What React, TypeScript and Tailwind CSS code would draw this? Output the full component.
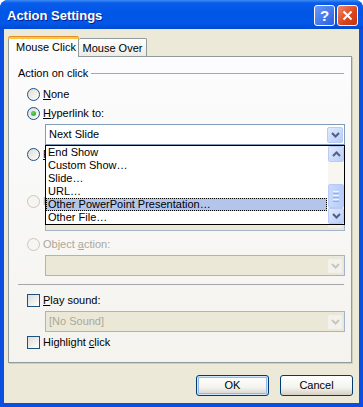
import clsx from "clsx";

function Chevron({ up, color = "#4D6185" }: { up?: boolean; color?: string }) {
  return (
    <svg width="9" height="6" viewBox="0 0 9 6">
      <path d={up ? "M1 5 L4.5 1.5 L8 5" : "M1 1 L4.5 4.5 L8 1"} fill="none" stroke={color} strokeWidth="2" />
    </svg>
  );
}

function ArrowButton({ up, disabled }: { up?: boolean; disabled?: boolean }) {
  return (
    <span
      className={clsx(
        "flex h-[16px] w-[16px] shrink-0 items-center justify-center rounded-[2px] border",
        disabled
          ? "border-[#E8E6DD] bg-[#F2F1EB]"
          : "border-[#B9CBF5] bg-[linear-gradient(135deg,#E2EBFE,#B9CDF8)]"
      )}
    >
      <Chevron up={up} color={disabled ? "#C9C7BA" : "#4D6185"} />
    </span>
  );
}

function Radio({ checked, disabled }: { checked?: boolean; disabled?: boolean }) {
  return (
    <span
      className={clsx(
        "flex h-[13px] w-[13px] shrink-0 items-center justify-center rounded-full border",
        disabled ? "border-[#CAC8BB] bg-[#F6F5F1]" : "border-[#1C5180] bg-[linear-gradient(135deg,#DCDBD5,#FFFFFF)]"
      )}
    >
      {checked && <span className="h-[5px] w-[5px] rounded-full bg-[radial-gradient(circle_at_35%_35%,#5ED95A,#21A121)]" />}
    </span>
  );
}

function Checkbox() {
  return <span className="h-[13px] w-[13px] shrink-0 border border-[#1C5180] bg-[linear-gradient(135deg,#DCDBD5,#FFFFFF)]" />;
}

function Combo({ text, disabled, children }: { text?: string; disabled?: boolean; children?: React.ReactNode }) {
  return (
    <div
      className={clsx(
        "relative ml-[36px] mr-[6px] flex h-[21px] items-center border p-[1px]",
        disabled ? "border-[#A5B5C9] bg-[#EBE8D8]" : "border-[#7F9DB9] bg-white"
      )}
    >
      <span className={clsx("flex-1 pl-[2px] leading-[13px]", disabled ? "text-[#ACA899]" : "text-black")}>{text}</span>
      <span className="mt-[1px] flex h-[17px] items-start">
        <ArrowButton disabled={disabled} />
      </span>
      {children}
    </div>
  );
}

const items = ["End Show", "Custom Show…", "Slide…", "URL…", "Other PowerPoint Presentation…", "Other File…"];

function DropList() {
  return (
    <div className="absolute left-[-1px] top-[20px] z-20 flex h-[80px] w-[300px] border border-black bg-white">
      <div className="flex flex-1 flex-col">
        {items.map((it, i) => (
          <div
            key={it}
            className={clsx(
              "h-[13px] pl-[2px] leading-[13px] text-black",
              i === 4 && "mr-[1px] bg-[#B4C5EB] outline-1 outline-dotted outline-black -outline-offset-1"
            )}
          >
            {it}
          </div>
        ))}
      </div>
      <div className="flex w-[16px] flex-col bg-[#F7F6F0]">
        <ArrowButton up />
        <div className="h-[22px]" />
        <div className="flex h-[24px] w-[16px] flex-col items-center justify-center gap-[1px] rounded-[2px] border border-[#B9CBF5] bg-[linear-gradient(90deg,#CADAFC,#B6CCF8)]">
          <span className="h-px w-[6px] bg-[#EEF4FE]" />
          <span className="h-px w-[6px] bg-[#8CB0F8]" />
          <span className="h-px w-[6px] bg-[#EEF4FE]" />
          <span className="h-px w-[6px] bg-[#8CB0F8]" />
          <span className="h-px w-[6px] bg-[#EEF4FE]" />
          <span className="h-px w-[6px] bg-[#8CB0F8]" />
        </div>
        <ArrowButton />
      </div>
    </div>
  );
}

function Row({ children, className }: { children: React.ReactNode; className?: string }) {
  return <div className={clsx("ml-[18px] flex h-[13px] items-center gap-[3px] leading-[13px]", className)}>{children}</div>;
}

export default function App() {
  return (
    <div className="flex h-[407px] w-[363px] flex-col rounded-t-[8px] bg-[#0A4FDF] font-['Liberation_Sans',Arial,sans-serif] text-[11px] text-black">
      {/* title bar */}
      <div className="flex h-[29px] shrink-0 items-center rounded-t-[8px] bg-[linear-gradient(180deg,#3D8CF5_0%,#0A5DEB_10%,#0055E5_45%,#0058EA_80%,#0049D0_100%)] pl-[7px] pr-[5px] pt-[2px]">
        <span className="flex-1 text-[13px] font-bold text-white [text-shadow:1px_1px_0_#0A1E8A]">Action Settings</span>
        <div className="flex gap-[1px]">
          <span className="flex h-[21px] w-[21px] items-center justify-center rounded-[3px] border border-white bg-[linear-gradient(135deg,#6A9AF9,#2A5FE0)] text-[15px] font-bold leading-none text-white">
            ?
          </span>
          <span className="ml-[1px] flex h-[21px] w-[21px] items-center justify-center rounded-[3px] border border-white bg-[linear-gradient(135deg,#F08A6C,#D9421C_60%,#C2370F)]">
            <svg width="11" height="11" viewBox="0 0 11 11">
              <path d="M1.5 1.5 L9.5 9.5 M9.5 1.5 L1.5 9.5" stroke="#FFFFFF" strokeWidth="2" />
            </svg>
          </span>
        </div>
      </div>

      {/* body */}
      <div className="mx-[4px] mb-[4px] flex flex-1 flex-col bg-[#ECE9D8] pl-[4px] pr-[7px] pt-[7px]">
        <div className="flex h-[20px] items-end">
          <div className="relative z-10 -mb-px flex h-[21px] w-[71px] flex-col rounded-t-[3px] border-x border-[#919B9C] bg-[#FCFCFE]">
            <span className="-mx-px h-[3px] rounded-t-[3px] border-t border-[#E68B2C] bg-[#FFC83C]" />
            <span className="pl-[7px] pt-[2px] leading-[13px]">Mouse Click</span>
          </div>
          <div className="flex h-[18px] w-[68px] items-center justify-center rounded-t-[2px] border-r border-t border-[#919B9C] bg-[linear-gradient(180deg,#FFFFFF,#ECEBE6)] pt-[2px] leading-[13px]">
            Mouse Over
          </div>
        </div>

        <div className="flex h-[307px] flex-col border border-[#919B9C] bg-[linear-gradient(180deg,#FCFCFE,#F4F3EE)] shadow-[1px_1px_0_#D0CEBF]">
          <div className="ml-[9px] mr-[7px] mt-[10px] flex h-[13px] items-center leading-[13px]">
            <span>Action on click</span>
            <span className="ml-[3px] flex-1 border-t border-[#A7A6AA]" />
          </div>

          <Row className="mt-[8px]">
            <Radio />
            <span>
              <u>N</u>one
            </span>
          </Row>
          <Row className="mt-[6px]">
            <Radio checked />
            <span>
              <u>H</u>yperlink to:
            </span>
          </Row>
          <div className="relative z-20 mt-[4px]">
            <Combo text="Next Slide">
              <DropList />
            </Combo>
          </div>

          <Row className="mt-[3px]">
            <Radio />
            <span>
              <u>R</u>un program:
            </span>
          </Row>
          <div className="ml-[36px] mr-[6px] mt-[3px] flex h-[21px] gap-[6px]">
            <div className="flex-1 border border-[#7F9DB9] bg-white" />
            <div className="w-[73px] rounded-[3px] border border-[#003C74]" />
          </div>

          <Row className="mt-[10px] text-[#ACA899]">
            <Radio disabled />
            <span>
              Run <u>m</u>acro:
            </span>
          </Row>
          <div className="mt-[2px]">
            <Combo disabled />
          </div>

          <Row className="mt-[7px] text-[#ACA899]">
            <Radio disabled />
            <span>
              Object <u>a</u>ction:
            </span>
          </Row>
          <div className="mt-[4px]">
            <Combo disabled />
          </div>

          <div className="ml-[9px] mr-[7px] mt-[8px] border-t border-[#A7A6AA]" />

          <Row className="mt-[9px]">
            <Checkbox />
            <span>
              <u>P</u>lay sound:
            </span>
          </Row>
          <div className="mt-[4px]">
            <Combo disabled text="[No Sound]" />
          </div>
          <Row className="mt-[4px]">
            <Checkbox />
            <span>
              Highlight <u>c</u>lick
            </span>
          </Row>
        </div>

        <div className="-mr-[1px] mt-[12px] flex justify-end gap-[11px]">
          <button className="h-[21px] w-[73px] rounded-[3px] border border-[#003C74] bg-[linear-gradient(180deg,#FFFFFF,#F3F3EF_60%,#D6D0C5)] text-[11px] leading-[13px] shadow-[inset_0_0_0_1px_#CEE7FF,inset_0_0_0_2px_#98B8EA]">
            OK
          </button>
          <button className="h-[21px] w-[73px] rounded-[3px] border border-[#003C74] bg-[linear-gradient(180deg,#FFFFFF,#F3F3EF_60%,#D6D0C5)] text-[11px] leading-[13px]">
            Cancel
          </button>
        </div>
      </div>
    </div>
  );
}
